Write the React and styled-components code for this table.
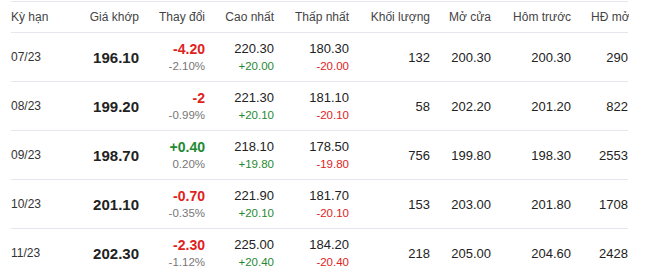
import React from "react";
import styled, { createGlobalStyle } from "styled-components";

const GlobalStyle = createGlobalStyle`
  body {
    margin: 0;
    background: #fff;
    font-family: "Liberation Sans", Arial, sans-serif;
  }
`;

const Wrap = styled.div`
  width: 618px;
  margin-left: 11px;
  padding-top: 1px;
  overflow: hidden;
`;

const Table = styled.table`
  width: 617px;
  border-collapse: collapse;
  table-layout: fixed;
  border-top: 1px solid #e4e8ee;
`;

const Th = styled.th`
  height: 30px;
  padding: 0;
  font-size: 12px;
  font-weight: normal;
  color: #444;
  text-align: ${p => (p.left ? "left" : "right")};
  white-space: nowrap;
  border-bottom: 1px solid #e4e8ee;
  overflow: visible;
`;

const Td = styled.td`
  height: 48px;
  padding: 0;
  text-align: right;
  vertical-align: middle;
  font-size: 13px;
  color: #222;
  border-bottom: 1px solid #e4e8ee;
  white-space: nowrap;
`;

const Term = styled(Td)`
  text-align: left;
  font-size: 12px;
  color: #333;
`;

const Price = styled(Td)`
  font-size: 15px;
  font-weight: bold;
  color: #222;
`;

const Main = styled.div`
  font-size: ${p => (p.bold ? "14px" : "13px")};
  font-weight: ${p => (p.bold ? "bold" : "normal")};
  line-height: 18px;
  color: ${p => (p.tone === "up" ? "#1f8a33" : p.tone === "down" ? "#e0221c" : "#222")};
`;

const Sub = styled.div`
  font-size: 11.5px;
  line-height: 16px;
  color: ${p => (p.tone === "up" ? "#1f8a33" : p.tone === "down" ? "#e0221c" : "#777")};
`;

const LastHead = styled.span`
  display: inline-block;
  padding-left: 20px;
`;

const widths = [59, 69, 66, 69, 75, 81, 61, 80, 57];

const rows = [
  { term: "07/23", price: "196.10", chg: "-4.20", pct: "-2.10%", hi: "220.30", hiD: "+20.00", lo: "180.30", loD: "-20.00", vol: "132", open: "200.30", prev: "200.30", oi: "290" },
  { term: "08/23", price: "199.20", chg: "-2", pct: "-0.99%", hi: "221.30", hiD: "+20.10", lo: "181.10", loD: "-20.10", vol: "58", open: "202.20", prev: "201.20", oi: "822" },
  { term: "09/23", price: "198.70", chg: "+0.40", pct: "0.20%", hi: "218.10", hiD: "+19.80", lo: "178.50", loD: "-19.80", vol: "756", open: "199.80", prev: "198.30", oi: "2553" },
  { term: "10/23", price: "201.10", chg: "-0.70", pct: "-0.35%", hi: "221.90", hiD: "+20.10", lo: "181.70", loD: "-20.10", vol: "153", open: "203.00", prev: "201.80", oi: "1708" },
  { term: "11/23", price: "202.30", chg: "-2.30", pct: "-1.12%", hi: "225.00", hiD: "+20.40", lo: "184.20", loD: "-20.40", vol: "218", open: "205.00", prev: "204.60", oi: "2428" },
];

export default function App() {
  return (
    <>
      <GlobalStyle />
      <Wrap>
        <Table>
          <colgroup>
            {widths.map((w, i) => (
              <col key={i} style={{ width: w }} />
            ))}
          </colgroup>
          <thead>
            <tr>
              <Th left>Kỳ hạn</Th>
              <Th>Giá khớp</Th>
              <Th>Thay đổi</Th>
              <Th>Cao nhất</Th>
              <Th>Thấp nhất</Th>
              <Th>Khối lượng</Th>
              <Th>Mở cửa</Th>
              <Th>Hôm trước</Th>
              <Th left><LastHead>HĐ mở</LastHead></Th>
            </tr>
          </thead>
          <tbody>
            {rows.map(r => (
              <tr key={r.term}>
                <Term>{r.term}</Term>
                <Price>{r.price}</Price>
                <Td>
                  <Main bold tone={r.chg.startsWith("+") ? "up" : "down"}>{r.chg}</Main>
                  <Sub>{r.pct}</Sub>
                </Td>
                <Td>
                  <Main>{r.hi}</Main>
                  <Sub tone="up">{r.hiD}</Sub>
                </Td>
                <Td>
                  <Main>{r.lo}</Main>
                  <Sub tone="down">{r.loD}</Sub>
                </Td>
                <Td>{r.vol}</Td>
                <Td>{r.open}</Td>
                <Td>{r.prev}</Td>
                <Td>{r.oi}</Td>
              </tr>
            ))}
          </tbody>
        </Table>
      </Wrap>
    </>
  );
}
